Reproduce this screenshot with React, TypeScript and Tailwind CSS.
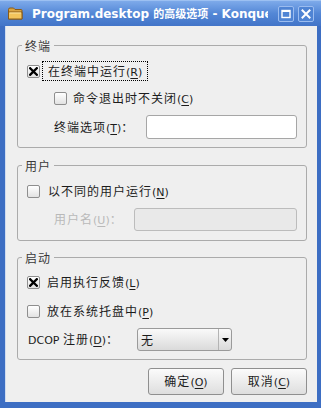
import React from "react";

const CJK_RE = /([\u2E80-\u9FFF\uFF00-\uFFEF\u3000-\u303F]+)/;

function Latin({ s }: { s: string }) {
  const idx = s.indexOf("&");
  if (idx < 0) return <span className="text-[11px] font-['DejaVu_Sans',sans-serif]">{s}</span>;
  return (
    <span className="text-[11px] font-['DejaVu_Sans',sans-serif]">
      {s.slice(0, idx)}
      <span className="underline underline-offset-[2px]">{s[idx + 1]}</span>
      {s.slice(idx + 2)}
    </span>
  );
}

function Txt({ s, disabled, tone }: { s: string; disabled?: boolean; tone?: string }) {
  const parts = s.split(CJK_RE).filter((p) => p.length > 0);
  return (
    <span className={disabled ? "text-[#b9b9b9] whitespace-nowrap" : tone ? tone + " whitespace-nowrap" : "text-[#1c1c1c] whitespace-nowrap"}>
      {parts.map((p, i) =>
        CJK_RE.test(p) ? (
          <span key={i} className="text-[12px] tracking-[1px] font-['Noto_Sans_CJK_SC',sans-serif]">
            {p}
          </span>
        ) : (
          <Latin key={i} s={p} />
        )
      )}
    </span>
  );
}

function Check({ checked }: { checked?: boolean }) {
  return (
    <span className="w-[13px] h-[13px] border border-[#8e8e8e] rounded-[2px] bg-linear-to-b from-[#ffffff] to-[#e2e2e2] flex items-center justify-center shrink-0">
      {checked && (
        <svg width="9" height="9" viewBox="0 0 9 9">
          <path d="M1.2 1.2L7.8 7.8M7.8 1.2L1.2 7.8" stroke="#000" strokeWidth="2.3" strokeLinecap="square" />
        </svg>
      )}
    </span>
  );
}

function Group({ title, className, children }: { title: string; className?: string; children: React.ReactNode }) {
  return (
    <fieldset className={"border border-[#ababab] rounded-[3px] px-0 " + (className ?? "")}>
      <legend className="ml-[4px] px-[3px] leading-[16px] h-[16px]">
        <Txt s={title} tone="text-[#3a3a3a]" />
      </legend>
      {children}
    </fieldset>
  );
}

function Button({ label }: { label: string }) {
  return (
    <div className="w-[76px] h-[27px] border border-[#8f8f8f] rounded-[3px] bg-linear-to-b from-[#fbfbfb] to-[#dedede] flex items-center justify-center leading-[16px]">
      <Txt s={label} />
    </div>
  );
}

export default function App() {
  return (
    <div className="w-[321px] h-[408px] flex flex-col bg-[#3d6ec3] overflow-hidden">
      {/* Title bar */}
      <div className="h-[26px] shrink-0 flex items-center bg-linear-to-b from-[#7eaaea] via-[#5387d6] to-[#4274c8] border-t border-[#9cc0f2]">
        <svg className="ml-[8px] shrink-0" width="15" height="13" viewBox="0 0 15 13">
          <path d="M0.5 2.5 Q0.5 1 2 1 L5.5 1 L7 2.5 L13 2.5 Q14 2.5 14 3.5 L14 12 L0.5 12 Z" fill="#d9a441" stroke="#8a5a16" strokeWidth="1" />
          <path d="M0.5 5 L14 5 L14 12 L0.5 12 Z" fill="#f2c45c" stroke="#8a5a16" strokeWidth="1" />
          <path d="M1.5 6 L13 6" stroke="#fbe3a0" strokeWidth="1" />
        </svg>
        <div className="ml-[9px] w-[236px] overflow-hidden whitespace-nowrap text-white font-bold text-[12px] leading-[16px] font-['DejaVu_Sans',sans-serif]">
          Program.desktop <span className="text-[11px] font-['Noto_Sans_CJK_SC',sans-serif] font-bold">的高级选项</span> - Konqueror
        </div>
        <div className="ml-[10px] w-[16px] h-[16px] rounded-[2px] border border-[#9bbcef] bg-[#4f84d4] flex items-center justify-center">
          <svg width="10" height="10" viewBox="0 0 10 10">
            <rect x="1" y="1.5" width="8" height="7" fill="none" stroke="#fff" strokeWidth="1.4" />
            <path d="M1 2 L9 2" stroke="#fff" strokeWidth="2" />
          </svg>
        </div>
        <div className="ml-[4px] w-[16px] h-[16px] rounded-[2px] border border-[#9bbcef] bg-[#4f84d4] flex items-center justify-center">
          <svg width="10" height="10" viewBox="0 0 10 10">
            <path d="M1.5 1.5L8.5 8.5M8.5 1.5L1.5 8.5" stroke="#fff" strokeWidth="2" strokeLinecap="square" />
          </svg>
        </div>
      </div>

      {/* Body */}
      <div className="flex-1 ml-[5px] mr-[4px] mb-[6px] bg-[#efefef] flex flex-col pl-[11px] pr-[10px] border-l border-[#cfdcf0]">
        {/* Terminal */}
        <Group title="终端" className="mt-[11px] pb-[8px]">
          <div className="mt-[8px] h-[20px] flex items-center pl-[9px]">
            <Check checked />
            <span className="ml-[2px] h-[20px] border border-dotted border-black px-[5px] flex items-center leading-[16px]">
              <Txt s="在终端中运行(&R)" />
            </span>
          </div>
          <div className="mt-[7px] h-[20px] flex items-center pl-[36px]">
            <Check />
            <span className="ml-[6px] leading-[16px]">
              <Txt s="命令退出时不关闭(&C)" />
            </span>
          </div>
          <div className="mt-[7px] h-[24px] flex items-center pl-[36px] pr-[9px]">
            <span className="w-[92px] leading-[16px]">
              <Txt s="终端选项(&T)：" />
            </span>
            <div className="flex-1 h-[24px] bg-white border border-[#a6a6a6] rounded-[3px]" />
          </div>
        </Group>

        {/* User */}
        <Group title="用户" className="mt-[9px] pb-[9px]">
          <div className="mt-[8px] h-[20px] flex items-center pl-[9px]">
            <Check />
            <span className="ml-[8px] leading-[16px]">
              <Txt s="以不同的用户运行(&N)" />
            </span>
          </div>
          <div className="mt-[7px] h-[23px] flex items-center pl-[36px] pr-[9px]">
            <span className="w-[80px] leading-[16px]">
              <Txt s="用户名(&U)：" disabled />
            </span>
            <div className="flex-1 h-[23px] bg-[#e9e9e9] border border-[#bcbcbc] rounded-[3px]" />
          </div>
        </Group>

        {/* Startup */}
        <Group title="启动" className="mt-[8px] pb-[8px]">
          <div className="mt-[7px] h-[20px] flex items-center pl-[9px]">
            <Check checked />
            <span className="ml-[7px] leading-[16px]">
              <Txt s="启用执行反馈(&L)" />
            </span>
          </div>
          <div className="mt-[9px] h-[20px] flex items-center pl-[9px]">
            <Check />
            <span className="ml-[7px] leading-[16px]">
              <Txt s="放在系统托盘中(&P)" />
            </span>
          </div>
          <div className="mt-[7px] h-[23px] flex items-center pl-[10px]">
            <span className="w-[109px] leading-[16px]">
              <Txt s="DCOP 注册(&D)：" />
            </span>
            <div className="w-[95px] h-[23px] border border-[#9a9a9a] rounded-[3px] bg-linear-to-b from-[#fafafa] to-[#dadada] flex">
              <div className="flex-1 flex items-center pl-[3px] leading-[16px]">
                <Txt s="无" />
              </div>
              <div className="w-[13px] border-l border-[#b4b4b4] flex items-center justify-center">
                <svg width="7" height="4" viewBox="0 0 7 4">
                  <path d="M0 0 L7 0 L3.5 4 Z" fill="#000" />
                </svg>
              </div>
            </div>
          </div>
        </Group>

        {/* Buttons */}
        <div className="mt-[8px] flex justify-end gap-[7px]">
          <Button label="确定(&O)" />
          <Button label="取消(&C)" />
        </div>
      </div>
    </div>
  );
}
